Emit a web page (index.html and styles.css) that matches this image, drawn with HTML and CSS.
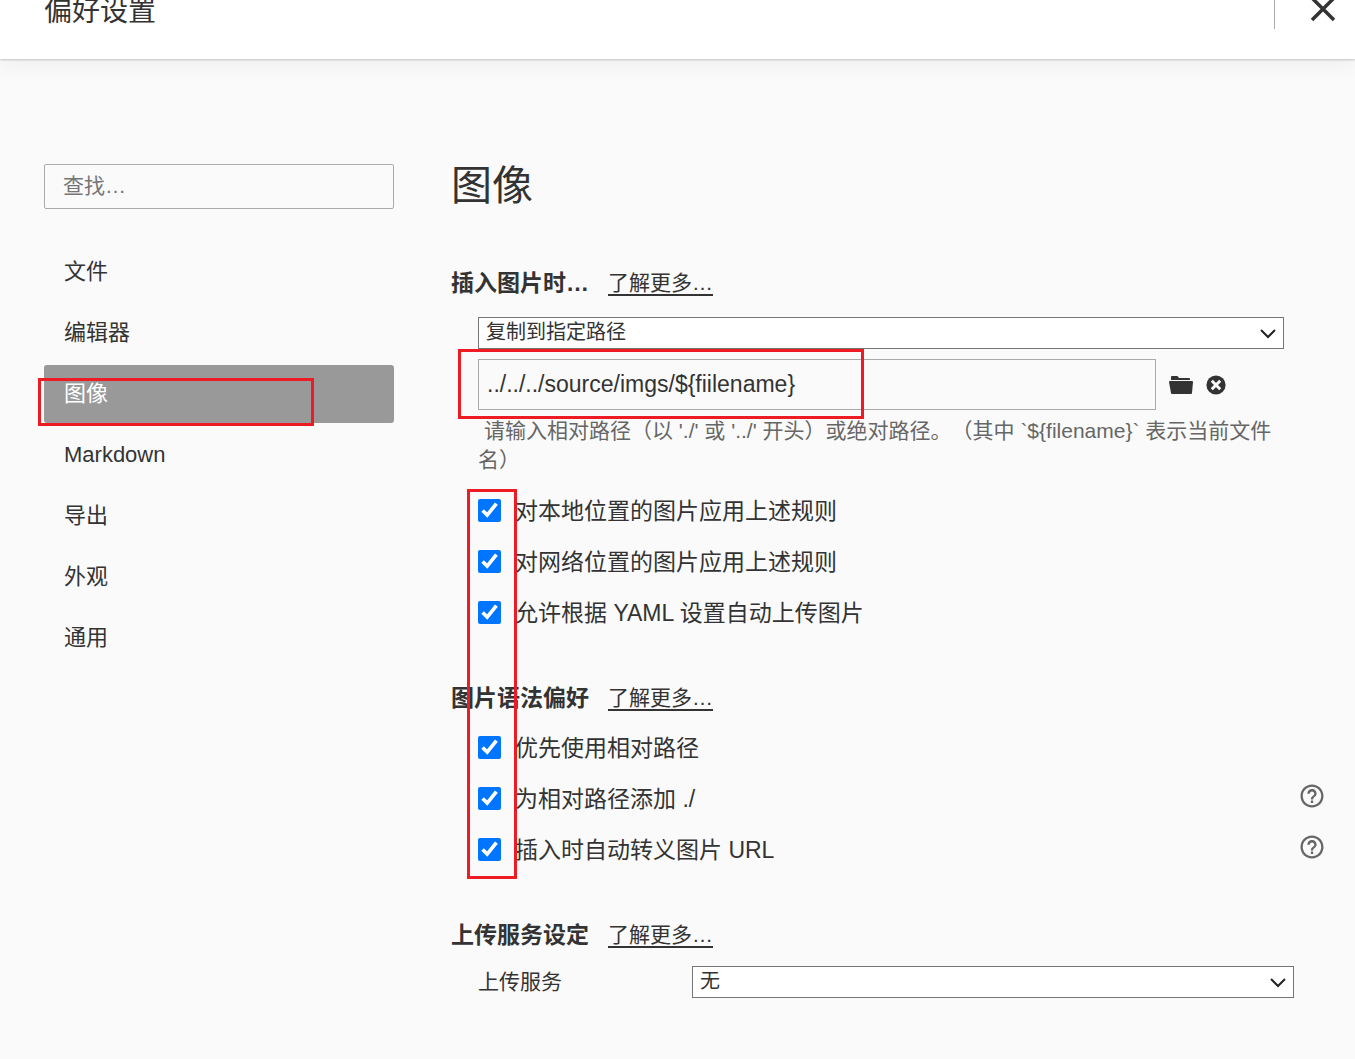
FILE: index.html
```html
<!DOCTYPE html>
<html lang="zh-CN">
<head>
<meta charset="utf-8">
<meta name="viewport" content="width=device-width, initial-scale=1">
<title>偏好设置</title>
<link rel="stylesheet" href="styles.css">
</head>
<body>
<header class="topbar">
  <div class="topbar-title">偏好设置</div>
  <div class="topbar-divider"></div>
  <button class="icon-button close" type="button" aria-label="关闭">
    <svg width="26" height="22" viewBox="0 0 26 22"><path d="M2-2 24 20M24-2 2 20" fill="none" stroke="#333" stroke-width="3.500"/></svg>
  </button>
</header>

<div class="layout">
  <aside class="sidebar">
    <input class="search" type="search" placeholder="查找…" aria-label="查找">
    <nav class="nav">
      <a class="nav-item" href="#file">文件</a>
      <a class="nav-item" href="#editor">编辑器</a>
      <a class="nav-item active" href="#image" aria-current="page">图像<span class="mark mark-nav"></span></a>
      <a class="nav-item" href="#markdown">Markdown</a>
      <a class="nav-item" href="#export">导出</a>
      <a class="nav-item" href="#appearance">外观</a>
      <a class="nav-item" href="#general">通用</a>
    </nav>
  </aside>

  <main class="content" id="image">
    <h1>图像</h1>

    <section class="section">
      <div class="section-head">
        <h2>插入图片时…</h2>
        <a class="more" href="#insert">了解更多…</a>
      </div>
      <div class="insert-options">
        <div class="select-wrap">
          <select class="select" aria-label="插入图片时"><option>复制到指定路径</option></select>
          <svg class="chevron" width="16" height="10" viewBox="0 0 16 10"><path d="M1 1 8 8 15 1" fill="none" stroke="#222" stroke-width="2"/></svg>
        </div>
        <div class="path-row">
          <input class="path" type="text" value="../../../source/imgs/${fiilename}" aria-label="图片路径">
          <button class="icon-button" type="button" aria-label="选择文件夹">
            <svg width="24" height="20" viewBox="0 0 24 20"><path d="M2 4V2q0-1 1-1h5q1 0 2 2h10q1 0 1 1v1H2zM1 6h22q1 0 1 1l-1 11q0 1-1 1H3q-1 0-1-1L0 7q0-1 1-1z" fill="#333"/></svg>
          </button>
          <button class="icon-button" type="button" aria-label="清除">
            <svg width="20" height="20" viewBox="0 0 20 20"><circle cx="10" cy="10" r="9.600" fill="#333"/><path d="M5.800 5.800 14.200 14.200M14.200 5.800 5.800 14.200" stroke="#fafafa" stroke-width="3"/></svg>
          </button>
          <span class="mark mark-path"></span>
        </div>
        <p class="hint">请输入相对路径（以 './' 或 '../' 开头）或绝对路径。（其中 `${filename}` 表示当前文件名）</p>
      </div>
      <div class="checks">
        <label class="check"><input type="checkbox" checked>对本地位置的图片应用上述规则</label>
        <label class="check"><input type="checkbox" checked>对网络位置的图片应用上述规则</label>
        <label class="check"><input type="checkbox" checked>允许根据 YAML 设置自动上传图片</label>
      </div>
    </section>

    <section class="section">
      <div class="section-head">
        <h2>图片语法偏好</h2>
        <a class="more" href="#syntax">了解更多…</a>
      </div>
      <div class="checks">
        <label class="check"><input type="checkbox" checked>优先使用相对路径</label>
        <div class="check-row">
          <label class="check"><input type="checkbox" checked>为相对路径添加 ./</label>
          <button class="icon-button help" type="button" aria-label="帮助">
            <svg width="24" height="24" viewBox="0 0 24 24"><path d="M11 18h2v-2h-2v2zm1-16C6.480 2 2 6.480 2 12s4.480 10 10 10 10-4.480 10-10S17.520 2 12 2zm0 18c-4.410 0-8-3.590-8-8s3.590-8 8-8 8 3.590 8 8-3.590 8-8 8zm0-14c-2.210 0-4 1.790-4 4h2c0-1.100.9-2 2-2s2 .9 2 2c0 2-3 1.750-3 5h2c0-2.250 3-2.500 3-5 0-2.210-1.790-4-4-4z" transform="translate(-1.800 -1.800) scale(1.150)" fill="#666"/></svg>
          </button>
        </div>
        <div class="check-row">
          <label class="check"><input type="checkbox" checked>插入时自动转义图片 URL</label>
          <button class="icon-button help" type="button" aria-label="帮助">
            <svg width="24" height="24" viewBox="0 0 24 24"><path d="M11 18h2v-2h-2v2zm1-16C6.480 2 2 6.480 2 12s4.480 10 10 10 10-4.480 10-10S17.520 2 12 2zm0 18c-4.410 0-8-3.590-8-8s3.590-8 8-8 8 3.590 8 8-3.590 8-8 8zm0-14c-2.210 0-4 1.790-4 4h2c0-1.100.9-2 2-2s2 .9 2 2c0 2-3 1.750-3 5h2c0-2.250 3-2.500 3-5 0-2.210-1.790-4-4-4z" transform="translate(-1.800 -1.800) scale(1.150)" fill="#666"/></svg>
          </button>
        </div>
      </div>
    </section>

    <section class="section">
      <div class="section-head">
        <h2>上传服务设定</h2>
        <a class="more" href="#upload">了解更多…</a>
      </div>
      <div class="field">
        <label for="uploader">上传服务</label>
        <div class="select-wrap">
          <select class="select" id="uploader"><option>无</option></select>
          <svg class="chevron" width="16" height="10" viewBox="0 0 16 10"><path d="M1 1 8 8 15 1" fill="none" stroke="#222" stroke-width="2"/></svg>
        </div>
      </div>
    </section>
    <span class="mark mark-checks"></span>
  </main>
</div>
</body>
</html>
```
FILE: styles.css
```css
* {
  box-sizing: border-box;
}

body {
  margin: 0;
  background: #fafafa;
  color: #333;
  font-family: "Liberation Sans", "Noto Sans CJK SC", sans-serif;
  font-size: 22px;
}

input,
select,
button {
  margin: 0;
  color: inherit;
  font-family: inherit;
}

a {
  color: inherit;
}

.topbar {
  display: flex;
  align-items: flex-start;
  padding: 0 19px 30px 44px;
  background: #fff;
  box-shadow: 0 1px 2px rgba(0, 0, 0, 0.2), 0 4px 24px rgba(0, 0, 0, 0.06);
}

.topbar-title {
  flex: 1;
  font-size: 28px;
  line-height: 24px;
}

.topbar-divider {
  width: 1px;
  height: 29px;
  margin-right: 35px;
  background: #aaa;
}

.icon-button {
  display: flex;
  padding: 0;
  border: 0;
  background: none;
}

.layout {
  display: grid;
  grid-template-columns: 350px 1fr;
  gap: 57px;
  padding: 105px 31px 60px 44px;
}

.search {
  display: block;
  width: 100%;
  height: 45px;
  padding: 0 18px 2px;
  border: 1px solid #aaa;
  border-radius: 2px;
  background: transparent;
  font-size: 21px;
}

.search::placeholder {
  color: #757575;
}

.nav {
  display: flex;
  flex-direction: column;
  gap: 3px;
  margin-top: 34px;
}

.nav-item {
  position: relative;
  padding: 0 20px;
  border-radius: 3px;
  line-height: 58px;
  text-decoration: none;
}

.nav-item.active {
  background: #999;
  color: #fff;
}

.content {
  position: relative;
}

h1 {
  margin: 0 0 59px;
  font-size: 41px;
  font-weight: 400;
  line-height: 45px;
}

.section + .section {
  margin-top: 45px;
}

.section-head {
  display: flex;
  gap: 19px;
  line-height: 30px;
}

h2 {
  margin: 0;
  font-size: 23px;
  line-height: 30px;
}

.more {
  font-size: 21px;
  text-underline-offset: 4px;
}

.insert-options {
  margin: 19px 40px 0 27px;
}

.select-wrap {
  position: relative;
}

.select {
  display: block;
  width: 100%;
  height: 32px;
  padding: 0 32px 2px 7px;
  border: 1px solid #767676;
  border-radius: 0;
  background: #fff;
  font-size: 20px;
  appearance: none;
}

.chevron {
  position: absolute;
  top: 12px;
  right: 8px;
  pointer-events: none;
}

.path-row {
  position: relative;
  display: flex;
  align-items: center;
  gap: 13px;
  margin-top: 10px;
  padding-right: 58px;
}

.path {
  flex: 1;
  min-width: 0;
  height: 51px;
  padding: 0 8px;
  border: 1px solid #aaa;
  background: transparent;
  font-size: 23px;
}

.hint {
  margin: 6px 0 0;
  color: #666;
  font-size: 21px;
  line-height: 29px;
  text-indent: 6px;
  text-spacing-trim: space-all;
}

.checks {
  margin: 9px 0 0 27px;
}

.insert-options + .checks {
  margin-top: 11px;
}

.check {
  display: flex;
  align-items: center;
  gap: 14px;
  height: 51px;
  font-size: 23px;
  line-height: 24px;
}

.check input {
  width: 23px;
  height: 23px;
  accent-color: #0075ff;
}

.check-row {
  display: flex;
  align-items: center;
  justify-content: space-between;
}

.help {
  margin-bottom: 6px;
}

.field {
  display: grid;
  grid-template-columns: 214px 1fr;
  align-items: center;
  margin: 16px 30px 0 27px;
  font-size: 21px;
  line-height: 30px;
}

/* Red highlight frames laid over the settings */
.mark {
  position: absolute;
  border: 3px solid #ed1c24;
  pointer-events: none;
}

.mark-nav {
  top: 13px;
  left: -6px;
  width: 276px;
  height: 48px;
}

.mark-path {
  top: -10px;
  left: -20px;
  width: 406px;
  height: 70px;
}

.mark-checks {
  top: 325px;
  left: 16px;
  width: 50px;
  height: 390px;
}
```
